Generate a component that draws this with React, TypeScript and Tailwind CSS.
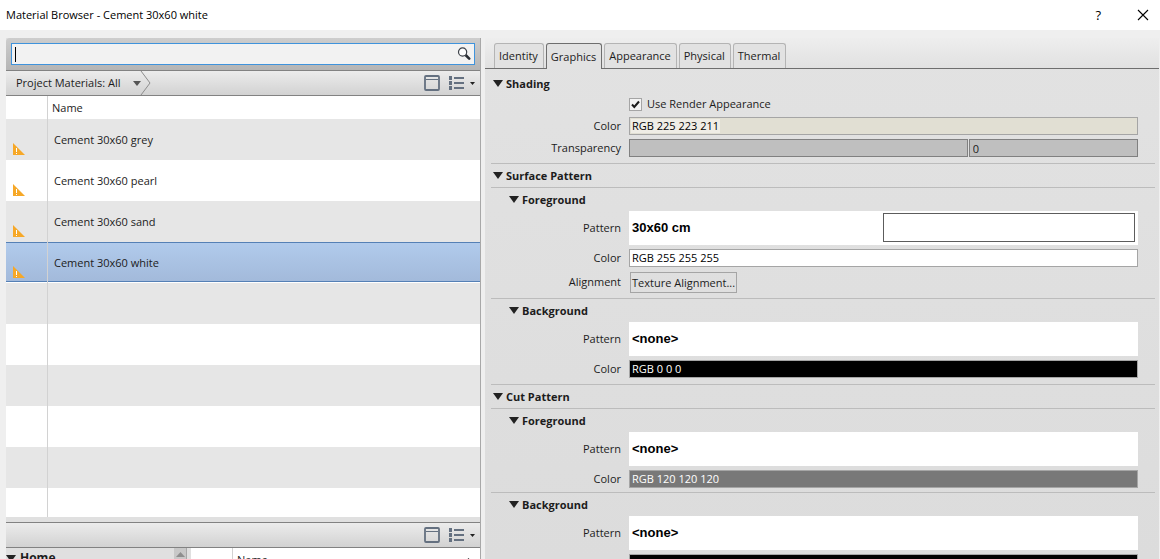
import { useState, type ReactNode } from "react";

const MATERIALS = ["Cement 30x60 grey", "Cement 30x60 pearl", "Cement 30x60 sand", "Cement 30x60 white"];
const ROW_COUNT = 10;
const TABS = ["Identity", "Graphics", "Appearance", "Physical", "Thermal"];

function Triangle({ className = "" }: { className?: string }) {
    return (
        <svg width="10" height="7" viewBox="0 0 10 7" className={className} aria-hidden="true">
            <path d="M0 0H10L5 7Z" fill="currentColor" />
        </svg>
    );
}

function SearchIcon() {
    return (
        <svg width="14" height="14" viewBox="0 0 14 14" aria-hidden="true">
            <path d="M8.6 8L12.2 11.6" stroke="#2b2f35" strokeWidth="2.6" strokeLinecap="round" />
            <circle cx="5.6" cy="5" r="4.1" fill="#fff" stroke="#3c4148" strokeWidth="1.2" />
        </svg>
    );
}

function WarningIcon() {
    return (
        <svg width="12" height="12" viewBox="0 0 12 12" aria-hidden="true">
            <path d="M0 0L12 12H0Z" fill="#f6a828" />
            <path d="M3 5H4V9H3ZM3 10H4V11H3Z" fill="#fff" />
        </svg>
    );
}

function ViewTools() {
    return (
        <div className="flex items-center pr-[5px] text-[#647080]">
            <button type="button" aria-label="Toggle library panel">
                <svg width="16" height="16" viewBox="0 0 16 16" fill="none" aria-hidden="true">
                    <rect x="1" y="1" width="14" height="14" rx="1" stroke="currentColor" strokeWidth="1.8" />
                    <path d="M2 4.5H14" stroke="currentColor" />
                </svg>
            </button>
            <button type="button" aria-label="View options" className="ml-[9px] flex items-center gap-[6px]">
                <svg width="15" height="14" viewBox="0 0 15 14" fill="currentColor" aria-hidden="true">
                    <path d="M0 0H3V4H0ZM0 5H3V9H0ZM0 10H3V14H0ZM5 1H15V3H5ZM5 6H15V8H5ZM5 11H15V13H5Z" />
                </svg>
                <svg width="5" height="3" viewBox="0 0 5 3" aria-hidden="true">
                    <path d="M0 0H5L2.5 3Z" fill="#222" />
                </svg>
            </button>
        </div>
    );
}

function Heading({ title, nested }: { title: string; nested?: boolean }) {
    return (
        <h2 className={nested ? "pl-[18px]" : "pl-[2px]"}>
            <button type="button" className="flex h-[23px] items-center gap-[3px] font-bold">
                <Triangle className="text-[#222]" />
                {title}
            </button>
        </h2>
    );
}

function Field({ id, label, children }: { id: string; label: string; children: ReactNode }) {
    return (
        <div className="grid grid-cols-[130px_1fr] items-center gap-2 pr-[17px]">
            <label htmlFor={id} className="text-right">{label}</label>
            {children}
        </div>
    );
}

function PatternField({ id, value, preview }: { id: string; value: string; preview?: boolean }) {
    return (
        <Field id={id} label="Pattern">
            <button id={id} type="button" className="flex h-[34px] items-center bg-white px-[3px] text-left font-['Liberation_Sans',sans-serif] text-[13px] font-bold text-black">
                <span className="flex-1">{value}</span>
                {preview && <span className="mb-px h-[29px] flex-1 border border-[#5c5c5c]" />}
            </button>
        </Field>
    );
}

function ColorField({ id, value, tone }: { id: string; value: string; tone: string }) {
    return (
        <Field id={id} label="Color">
            <button id={id} type="button" className={`flex h-[18px] items-center border border-[#a5a5a5] px-[2px] text-left ${tone}`}>
                {value}
            </button>
        </Field>
    );
}

function MaterialList() {
    const [selected, setSelected] = useState(3);
    return (
        <table className="w-full table-fixed border-separate border-spacing-0">
            <thead>
                <tr className="h-[23px]">
                    <th aria-label="Status" className="w-[42px] border-r border-[#d2d2d2] p-0" />
                    <th className="p-0 pl-1 text-left font-normal">Name</th>
                </tr>
            </thead>
            <tbody>
                {Array.from({ length: ROW_COUNT }, (_, i) => {
                    const name = MATERIALS[i];
                    const fill = i === selected
                        ? "bg-linear-to-b from-[#b1cbec] to-[#a2b9da] shadow-[inset_0_1px_#5580b5,inset_0_-1px_#fff,inset_0_-2px_#5580b5]"
                        : i % 2 === 0 ? "bg-[#e6e6e6]" : "bg-white";
                    return (
                        <tr key={i} className="h-[41px]" onClick={() => name && setSelected(i)}>
                            <td className={`border-r border-[#d2d2d2] p-0 pb-[5px] pl-[7px] align-bottom ${fill}`}>{name && <WarningIcon />}</td>
                            <td className={`p-0 pl-[6px] ${fill}`}>{name}</td>
                        </tr>
                    );
                })}
            </tbody>
        </table>
    );
}

function BrowserPane() {
    return (
        <section className="flex min-h-0 flex-col border-r border-[#a8a8a8] bg-[#e0e0e0]">
            <div className="h-8 shrink-0 rounded-tl-sm bg-linear-to-b from-[#cdcdcd] to-[#b5b5b5] px-[5px] pt-[5px]">
                <div className="relative flex h-[22px] items-center border border-[#3f93dc] bg-[#f2f2f2] pr-[3px]">
                    <input type="text" aria-label="Search materials" className="h-full min-w-0 flex-1 bg-transparent px-1 outline-none" />
                    <span className="absolute top-[3px] left-[3px] h-[15px] w-px bg-black" />
                    <button type="button" aria-label="Search"><SearchIcon /></button>
                </div>
            </div>
            <div className="flex h-[26px] shrink-0 items-center justify-between border-y border-[#828282] bg-linear-to-b from-[#ececec] to-[#d2d2d2]">
                <button type="button" className="flex h-full items-center pl-[10px]">
                    Project Materials: All
                    <svg width="18" height="24" viewBox="0 0 18 24" fill="none" className="ml-3" aria-hidden="true">
                        <path d="M0 10H8L4 15Z" fill="#555" />
                        <path d="M8 0L17 12L8 24" stroke="#8c8c8c" />
                    </svg>
                </button>
                <ViewTools />
            </div>
            <div className="min-h-0 flex-1 overflow-hidden bg-white">
                <MaterialList />
            </div>
            <div className="mt-[5px] flex h-[26px] shrink-0 items-center justify-end border-y border-[#828282] bg-linear-to-b from-[#ececec] to-[#d2d2d2]">
                <ViewTools />
            </div>
            <div className="flex h-[11px] shrink-0 overflow-hidden">
                <div className="flex h-5 w-[168px] items-center gap-1 text-[12px] font-bold">
                    <Triangle className="text-[#222]" />
                    Home
                </div>
                <div className="flex w-[13px] justify-center border-r border-[#a8a8a8] bg-[#c8c8c8] pt-1">
                    <svg width="9" height="5" viewBox="0 0 9 5" aria-hidden="true">
                        <path d="M0 5L4.5 0L9 5Z" fill="#8e8e8e" />
                    </svg>
                </div>
                <div className="ml-1 flex flex-1 bg-white">
                    <div className="h-6 w-[42px] border-r border-[#d2d2d2]" />
                    <div className="flex h-6 flex-1 items-center justify-between pr-2 pl-1">
                        Name
                        <svg width="7" height="4" viewBox="0 0 7 4" aria-hidden="true">
                            <path d="M0 4L3.5 0L7 4Z" fill="#222" />
                        </svg>
                    </div>
                </div>
            </div>
        </section>
    );
}

function GraphicsPanel() {
    const [render, setRender] = useState(true);
    return (
        <div className="divide-y divide-[#bcbcbc] pr-1 pl-[6px]">
            <div className="flex flex-col gap-1 pt-[3px] pb-[6px]">
                <div className="-mb-1"><Heading title="Shading" /></div>
                <label className="ml-[138px] flex h-[18px] items-center gap-[5px]">
                    <span className="relative flex size-[13px]">
                        <input type="checkbox" checked={render} onChange={() => setRender(!render)} className="size-[13px] appearance-none border border-[#a5a5a5] bg-[#f4f4f4]" />
                        {render && (
                            <svg width="13" height="13" viewBox="0 0 13 13" fill="none" className="pointer-events-none absolute inset-0" aria-hidden="true">
                                <path d="M3 6.5L5.3 9L10 3.5" stroke="#1c1c1c" strokeWidth="2" />
                            </svg>
                        )}
                    </span>
                    Use Render Appearance
                </label>
                <Field id="shading-color" label="Color">
                    <button id="shading-color" type="button" className="flex h-[18px] items-center border border-[#a5a5a5] bg-[#e1dfd3] px-px text-left text-black">
                        <span className="bg-[#efede6] px-px leading-[14px]">RGB 225 223 211</span>
                    </button>
                </Field>
                <Field id="transparency" label="Transparency">
                    <div className="grid grid-cols-[2fr_1fr] gap-px">
                        <input id="transparency" type="range" defaultValue={0} className="h-[18px] w-full appearance-none border border-[#808080] bg-[#bfbfbf] [&::-webkit-slider-thumb]:appearance-none" />
                        <input type="text" aria-label="Transparency value" defaultValue="0" className="h-[18px] w-full min-w-0 border border-[#808080] bg-[#bfbfbf] px-[3px] outline-none" />
                    </div>
                </Field>
            </div>
            <Heading title="Surface Pattern" />
            <div className="flex flex-col gap-1 pb-[5px]">
                <div className="-mb-1"><Heading title="Foreground" nested /></div>
                <PatternField id="surface-fg-pattern" value="30x60 cm" preview />
                <ColorField id="surface-fg-color" value="RGB 255 255 255" tone="bg-white text-black" />
                <Field id="surface-alignment" label="Alignment">
                    <button id="surface-alignment" type="button" className="mt-px ml-px h-[21px] justify-self-start border border-[#a5a5a5] px-px">Texture Alignment...</button>
                </Field>
            </div>
            <div className="flex flex-col gap-1 pb-[6px]">
                <div className="-mb-1"><Heading title="Background" nested /></div>
                <PatternField id="surface-bg-pattern" value="<none>" />
                <ColorField id="surface-bg-color" value="RGB 0 0 0" tone="bg-black text-white" />
            </div>
            <Heading title="Cut Pattern" />
            <div className="flex flex-col gap-1 pb-1">
                <div className="-mb-1"><Heading title="Foreground" nested /></div>
                <PatternField id="cut-fg-pattern" value="<none>" />
                <ColorField id="cut-fg-color" value="RGB 120 120 120" tone="bg-[#787878] text-white" />
            </div>
            <div className="flex flex-col gap-1 pb-1">
                <div className="-mb-1"><Heading title="Background" nested /></div>
                <PatternField id="cut-bg-pattern" value="<none>" />
                <ColorField id="cut-bg-color" value="RGB 0 0 0" tone="bg-black text-white" />
            </div>
        </div>
    );
}

export default function App() {
    const [tab, setTab] = useState("Graphics");
    return (
        <div className="flex h-screen flex-col overflow-hidden bg-[#efefef] font-['Open_Sans',sans-serif] text-[11px] leading-4 text-[#1c1c1c]">
            <header className="flex h-[30px] shrink-0 items-center justify-between bg-white pr-[11px] pl-[6px] text-black">
                <h1>Material Browser - Cement 30x60 white</h1>
                <div className="flex items-center gap-9">
                    <button type="button" aria-label="Help" className="text-[13px] font-medium">?</button>
                    <button type="button" aria-label="Close">
                        <svg width="12" height="12" viewBox="0 0 12 12" aria-hidden="true">
                            <path d="M1 1L11 11M11 1L1 11" stroke="#000" strokeWidth="1.1" />
                        </svg>
                    </button>
                </div>
            </header>
            <main className="grid min-h-0 flex-1 grid-cols-[475fr_674fr] gap-x-1 pt-2 pr-px pl-[6px]">
                <BrowserPane />
                <section className="min-h-0 overflow-hidden bg-linear-to-b from-[#e2e2e2] to-[#dcdcdc]">
                    <div role="tablist" className="flex h-[31px] items-end gap-[2px] border-b border-[#6e6e6e] bg-linear-to-b from-[#eeeeee] to-[#e1e1e1] pl-[9px]">
                        {TABS.map((t) => (
                            <button
                                key={t}
                                type="button"
                                role="tab"
                                aria-selected={t === tab}
                                onClick={() => setTab(t)}
                                className={`rounded-t-[3px] border border-b-0 bg-[#e2e2e2] pr-[5px] pl-1 ${t === tab ? "-mb-px h-[26px] border-[#6e6e6e]" : "h-[25px] border-[#b4b4b4]"}`}
                            >
                                {t}
                            </button>
                        ))}
                    </div>
                    <GraphicsPanel />
                </section>
            </main>
        </div>
    );
}
